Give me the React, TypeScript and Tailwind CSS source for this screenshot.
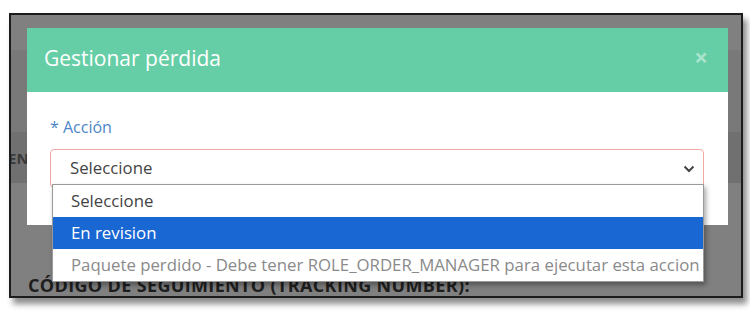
import React from "react";

export default function App() {
  return (
    <div className="w-[750px] h-[319px] bg-white overflow-hidden pt-[13px] pl-[9px]" style={{ fontFamily: '"Open Sans", "Noto Sans", sans-serif' }}>
      <div className="relative w-[734px] h-[285px] border-2 border-[#1c1c1c] bg-[#808080] shadow-[4px_6px_6px_rgba(0,0,0,0.45)] overflow-hidden">
        {/* page behind overlay */}
        <div className="flex flex-col">
          <div className="h-[35px] bg-[#808080]" />
          <div className="h-[82px] bg-[#797979]" />
          <div className="h-[51px] bg-[#707070] flex items-center">
            <span className="-ml-[3px] text-[15px] font-bold text-[#3a3a3a] leading-none pt-[2px]">EN</span>
          </div>
          <div className="h-[115px] bg-[#808080] flex items-end pl-[17px] pb-[4px]">
            <span className="text-[18px] font-bold text-[#1e1e1e] leading-none tracking-[0.35px]">CÓDIGO DE SEGUIMIENTO (TRACKING NUMBER):</span>
          </div>
        </div>

        {/* modal */}
        <div className="absolute left-[16px] top-[13px] w-[701px] flex flex-col">
          <div className="h-[64px] bg-[#66cea6] flex items-center justify-between pl-[17px] pr-[20px]">
            <span className="text-[21px] text-white leading-none pb-[3px]">Gestionar pérdida</span>
            <span className="text-[24px] font-bold text-[#a9e4cd] leading-none pb-[6px]">×</span>
          </div>
          <div className="h-[133px] bg-white pl-[23px] pr-[24px] pt-[24px]">
            <div className="text-[16px] leading-[22px] text-[#4d87c7]">* Acción</div>
            <div className="mt-[11px] h-[39px] rounded-[4px] border border-[#f2a8a2] flex items-center justify-between pl-[19px] pr-[8px]">
              <span className="text-[16.8px] text-[#444] leading-none">Seleccione</span>
              <svg width="12" height="8" viewBox="0 0 12 8" className="mt-[1px]">
                <path d="M1.5 1.5 L6 6 L10.5 1.5" fill="none" stroke="#444" strokeWidth="2" />
              </svg>
            </div>
          </div>
        </div>

        {/* dropdown list */}
        <div className="absolute left-[41px] top-[169px] w-[652px] border border-[#9a9a9a] bg-white shadow-[2px_3px_5px_rgba(0,0,0,0.35)] flex flex-col">
          <div className="h-[32px] flex items-center pl-[18px] text-[16.8px] text-[#444]">Seleccione</div>
          <div className="h-[32px] flex items-center pl-[18px] text-[16.8px] text-white bg-[#1967d2]">En revision</div>
          <div className="h-[32px] flex items-center pl-[18px] text-[16.8px] text-[#8a8a8a] whitespace-nowrap">Paquete perdido - Debe tener ROLE_ORDER_MANAGER para ejecutar esta accion</div>
        </div>
      </div>
    </div>
  );
}
